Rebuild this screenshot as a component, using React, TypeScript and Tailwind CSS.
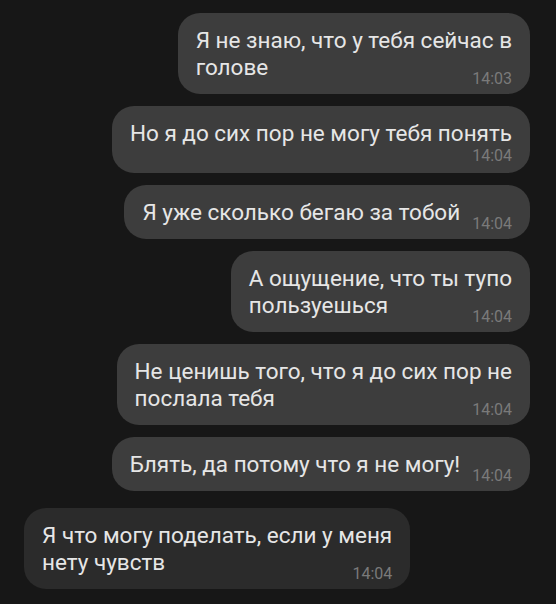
type Message = {
  lines: string[];
  time: string;
  mine?: boolean;
  timeBelow?: boolean;
};

const messages: Message[] = [
  { lines: ["Я не знаю, что у тебя сейчас в", "голове"], time: "14:03" },
  { lines: ["Но я до сих пор не могу тебя понять"], time: "14:04", timeBelow: true },
  { lines: ["Я уже сколько бегаю за тобой"], time: "14:04" },
  { lines: ["А ощущение, что ты тупо", "пользуешься"], time: "14:04" },
  { lines: ["Не ценишь того, что я до сих пор не", "послала тебя"], time: "14:04" },
  { lines: ["Блять, да потому что я не могу!"], time: "14:04" },
  { lines: ["Я что могу поделать, если у меня", "нету чувств"], time: "14:04", mine: true },
];

function Time({ value }: { value: string }) {
  return (
    <span className="relative top-[5px] shrink-0 text-[16px] leading-[14px] text-[#7a7a7a]">
      {value}
    </span>
  );
}

function Bubble({ message }: { message: Message }) {
  const head = message.lines.slice(0, -1);
  const last = message.lines[message.lines.length - 1];

  return (
    <div
      className={
        message.mine
          ? "mt-[5px] w-fit self-start rounded-[22px] bg-[#2b2b2b] px-[18px] pt-[14px] pb-[13px]"
          : "w-fit self-end rounded-[22px] bg-[#3d3d3d] px-[18px] pt-[14px] pb-[13px]"
      }
    >
      {head.map((line) => (
        <p key={line} className="whitespace-nowrap">
          {line}
        </p>
      ))}
      {message.timeBelow ? (
        <>
          <p className="whitespace-nowrap">{last}</p>
          <div className="-mb-[3px] mt-[2px] flex justify-end">
            <span className="shrink-0 text-[16px] leading-[14px] text-[#7a7a7a]">
              {message.time}
            </span>
          </div>
        </>
      ) : (
        <div className="flex items-end justify-between gap-3">
          <p className="whitespace-nowrap">{last}</p>
          <Time value={message.time} />
        </div>
      )}
    </div>
  );
}

export default function App() {
  return (
    <div className="min-h-[604px] w-[556px] bg-[#171717] font-['Roboto',sans-serif] text-[22.5px] leading-[27px] text-[#e6e6e6]">
      <div className="flex flex-col gap-[12px] pt-[13px] pr-[26px] pl-[24px]">
        {messages.map((m, i) => (
          <Bubble key={i} message={m} />
        ))}
      </div>
    </div>
  );
}
